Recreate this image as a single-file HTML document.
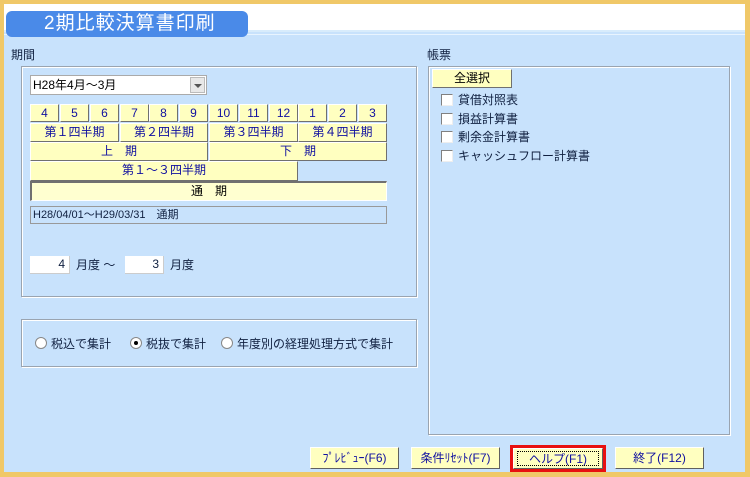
<!DOCTYPE html>
<html><head><meta charset="utf-8"><style>
*{margin:0;padding:0;box-sizing:border-box}
body{width:750px;height:477px;background:#f0c868;position:relative;overflow:hidden;font-family:"Liberation Sans","Noto Sans CJK JP",sans-serif;font-size:12px;color:#102040}
.win{position:absolute;left:4px;top:4px;width:741px;height:468px;background:#c8e2fc}
.hdr{position:absolute;left:4px;top:4px;width:741px;height:28px;background:#fff;border-bottom:2px solid #d8ecfc}
.hl{position:absolute;left:4px;top:34px;width:741px;height:1px;background:#e8f4ff}
.title{position:absolute;left:6px;top:11px;width:242px;height:26px;background:#4a8ae8;border-radius:6px;color:#fff;font-size:19px;line-height:26px;padding-left:38px;letter-spacing:1px}
.a{position:absolute}
.grp{position:absolute;border:1px solid #9aa4b0;box-shadow:1px 1px 0 #fff inset,1px 1px 0 #fff}
.b{position:absolute;background:#ffffc0;border:1px solid;border-color:#fff #707070 #707070 #fff;color:#1010a0;text-align:center;font-size:12px;line-height:16px}
.in{position:absolute;background:#fff;text-align:right;padding-right:4px;font-size:12px;line-height:17px;border-right:1px solid #ccc;border-bottom:1px solid #ccc}
.cb{position:absolute;width:12px;height:12px;background:#fff;border:1px solid #808080;border-right-color:#eee;border-bottom-color:#eee}
.rd{position:absolute;width:12px;height:12px;border-radius:50%;background:#fff;border:1px solid #888}
.fb{position:absolute;height:22px;background:#ffffc0;border:1px solid;border-color:#fff #606060 #606060 #fff;color:#1010a0;text-align:center;line-height:20px;font-size:12px}
</style></head><body>
<div class="win"></div>
<div class="hdr"></div><div class="hl"></div>
<div class="title">2期比較決算書印刷</div>
<div class="a" style="left:11px;top:46px">期間</div>
<div class="grp" style="left:21px;top:66px;width:396px;height:231px"></div>
<div class="a" style="left:30px;top:75px;width:177px;height:20px;background:#fff;border:1px solid #aaa;line-height:18px;padding-left:2px;font-size:12px;color:#000">H28年4月～3月
<div style="position:absolute;right:1px;top:1px;width:15px;height:16px;background:#e8e8e8;border:1px solid #bbb"><div style="margin:6px auto;width:0;height:0;border-left:4px solid transparent;border-right:4px solid transparent;border-top:4px solid #555"></div></div></div>
<div class="b" style="left:30px;top:104px;width:29px;height:18px">4</div>
<div class="b" style="left:60px;top:104px;width:29px;height:18px">5</div>
<div class="b" style="left:90px;top:104px;width:29px;height:18px">6</div>
<div class="b" style="left:120px;top:104px;width:29px;height:18px">7</div>
<div class="b" style="left:149px;top:104px;width:29px;height:18px">8</div>
<div class="b" style="left:179px;top:104px;width:29px;height:18px">9</div>
<div class="b" style="left:209px;top:104px;width:29px;height:18px">10</div>
<div class="b" style="left:239px;top:104px;width:29px;height:18px">11</div>
<div class="b" style="left:269px;top:104px;width:29px;height:18px">12</div>
<div class="b" style="left:298px;top:104px;width:29px;height:18px">1</div>
<div class="b" style="left:328px;top:104px;width:29px;height:18px">2</div>
<div class="b" style="left:358px;top:104px;width:29px;height:18px">3</div>
<div class="b" style="left:30px;top:123px;width:89px;height:19px">第１四半期</div>
<div class="b" style="left:120px;top:123px;width:88px;height:19px">第２四半期</div>
<div class="b" style="left:209px;top:123px;width:89px;height:19px">第３四半期</div>
<div class="b" style="left:298px;top:123px;width:89px;height:19px">第４四半期</div>
<div class="b" style="left:30px;top:142px;width:178px;height:19px">上　期</div>
<div class="b" style="left:209px;top:142px;width:178px;height:19px">下　期</div>
<div class="b" style="left:30px;top:161px;width:268px;height:20px">第１～３四半期</div>
<div class="b" style="left:30px;top:181px;width:357px;height:20px;border-color:#707070 #fff #fff #707070;border-width:2px 1px 1px 2px;color:#000;background:#ffffd0">通　期</div>
<div class="a" style="left:30px;top:206px;width:357px;height:18px;border:1px solid #999;line-height:16px;padding-left:2px;font-size:11px">H28/04/01～H29/03/31　通期</div>
<div class="in" style="left:30px;top:256px;width:40px;height:18px">4</div>
<div class="a" style="left:76px;top:256px">月度 ～</div>
<div class="in" style="left:125px;top:256px;width:39px;height:18px">3</div>
<div class="a" style="left:170px;top:256px">月度</div>
<div class="grp" style="left:21px;top:319px;width:396px;height:48px"></div>
<div class="rd" style="left:35px;top:337px"></div>
<div class="a" style="left:51px;top:335px">税込で集計</div>
<div class="rd" style="left:130px;top:337px"><div style="width:4px;height:4px;background:#000;border-radius:50%;margin:3px"></div></div>
<div class="a" style="left:146px;top:335px">税抜で集計</div>
<div class="rd" style="left:221px;top:337px"></div>
<div class="a" style="left:237px;top:335px">年度別の経理処理方式で集計</div>
<div class="a" style="left:427px;top:46px">帳票</div>
<div class="grp" style="left:428px;top:66px;width:302px;height:369px"></div>
<div class="b" style="left:432px;top:69px;width:80px;height:19px;color:#000">全選択</div>
<div class="cb" style="left:441px;top:94px"></div><div class="a" style="left:458px;top:91px">貸借対照表</div>
<div class="cb" style="left:441px;top:113px"></div><div class="a" style="left:458px;top:110px">損益計算書</div>
<div class="cb" style="left:441px;top:131px"></div><div class="a" style="left:458px;top:128px">剰余金計算書</div>
<div class="cb" style="left:441px;top:150px"></div><div class="a" style="left:458px;top:147px">キャッシュフロー計算書</div>
<div class="fb" style="left:310px;top:447px;width:89px">ﾌﾟﾚﾋﾞｭｰ(F6)</div>
<div class="fb" style="left:411px;top:447px;width:89px">条件ﾘｾｯﾄ(F7)</div>
<div class="a" style="left:510px;top:445px;width:96px;height:27px;border:3px solid #e81010"></div>
<div class="fb" style="left:513px;top:448px;width:90px;height:21px"><div style="position:absolute;left:3px;top:2px;right:3px;bottom:2px;border:1px dotted #000"></div>ヘルプ(F1)</div>
<div class="fb" style="left:615px;top:447px;width:89px">終了(F12)</div>
</body></html>
